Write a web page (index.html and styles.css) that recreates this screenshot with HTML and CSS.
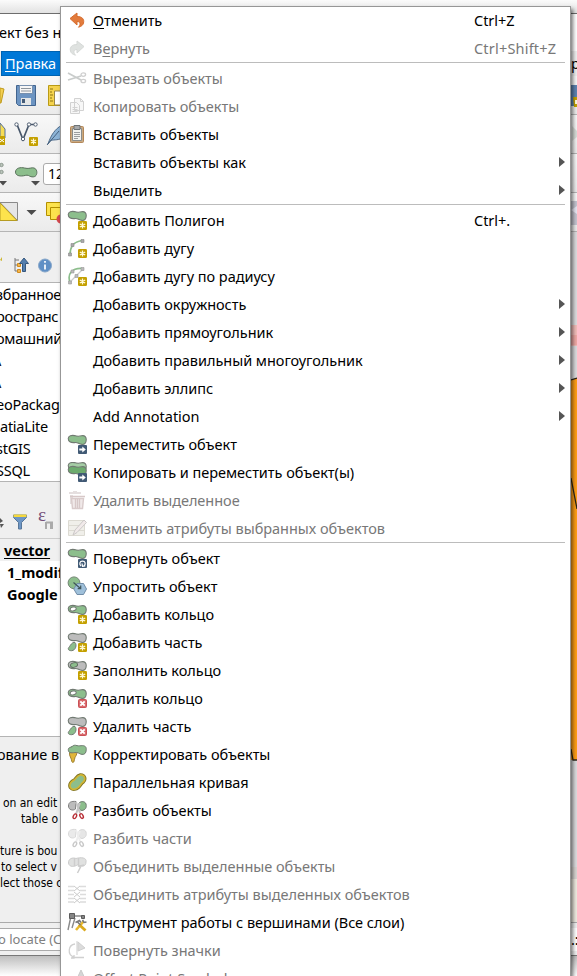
FILE: index.html
```html
<!DOCTYPE html>
<html lang="ru">
<head>
<meta charset="utf-8">
<title>QGIS</title>
<link rel="stylesheet" href="styles.css">
</head>
<body>
<svg class="defs" aria-hidden="true">
  <symbol id="blob" viewBox="0 0 20 20"><path d="M1.300 4.200C1.500 2 4.500 1 7.500 1.600C10 2.500 12 2.500 14.500 1.800C17.500 1 19.500 3 19.200 6C19.200 9 17.500 10.700 15 10.400C11.500 10.300 11 7.800 7.500 8.600C3.800 9 1 7.400 1.300 4.200Z" stroke="#717a72" stroke-width="1.100"/></symbol>
  <symbol id="star" viewBox="0 0 20 20"><rect x="11" y="11" width="9" height="9" rx="1.200" fill="#c4a000"/><path d="M15.500 12.400v6.200M12.800 14l5.400 3M18.200 14l-5.400 3" stroke="#fff9d8" stroke-width="1.300"/></symbol>
  <symbol id="go" viewBox="0 0 20 20"><rect x="11" y="11" width="9" height="9" rx="1" fill="#415a75"/><path d="M12.300 14.500h3v-2l3.500 3-3.500 3v-2h-3z" fill="#fff"/></symbol>
  <symbol id="del" viewBox="0 0 20 20"><rect x="11.500" y="11.500" width="8" height="8" rx="1" fill="#d9686b" stroke="#ca5156"/><path d="M13.300 13.300l4.400 4.400M17.700 13.300l-4.400 4.400" stroke="#fff" stroke-width="1.900"/></symbol>
  <symbol id="i-undo" viewBox="0 0 20 20"><path d="M3 8.500L10 3v3.500c5 0 7.500 2.500 6.500 6.500-.5 2-2 3.500-5 4.200 2-2 2.500-5.700-1.500-5.700V15z" fill="#e27b3c" stroke="#d66c2d" stroke-linejoin="round"/></symbol>
  <symbol id="i-redo" viewBox="0 0 20 20"><path d="M17 8.500L10 3v3.500c-5 0-7.500 2.500-6.500 6.500.5 2 2 3.500 5 4.200-2-2-2.500-5.700 1.500-5.700V15z" fill="#dfe2e0" stroke="#d6d9d7" stroke-linejoin="round"/></symbol>
  <symbol id="i-cut" viewBox="0 0 20 20"><path d="M1 5l13 7M1 12l13-4" fill="none" stroke="#c9cccb" stroke-width="1.700"/><ellipse cx="16.300" cy="6.600" rx="2.300" ry="1.700" fill="none" stroke="#cfcfcf" stroke-width="1.300"/><ellipse cx="16.300" cy="13" rx="2.300" ry="1.700" fill="none" stroke="#cfcfcf" stroke-width="1.300"/></symbol>
  <symbol id="i-copy" viewBox="0 0 20 20"><path d="M7.500 2.500h6l3 3v9h-9zM3.500 6.500h6l3 3v8h-9z" fill="#f7f7f7" stroke="#d2d2d2"/><path d="M5.500 11.500h5M5.500 13.500h5M5.500 15.500h5M13.500 2.500v3h3" stroke="#d2d2d2" fill="none"/></symbol>
  <symbol id="i-paste" viewBox="0 0 20 20"><rect x="3.500" y="2.500" width="13" height="16" rx="1" fill="#c9a982" stroke="#b3885a"/><path d="M5.500 4.500h9v12h-9z" fill="#f3f3f0" stroke="#898c8b"/><path d="M7 1.500h6v4H7z" fill="#a7a9ab" stroke="#6e7376"/><path d="M7 8.500h6M7 10.500h6M7 12.500h6M7 14.500h4" stroke="#9b9d9f"/></symbol>
  <symbol id="i-addpoly" viewBox="0 0 20 20"><use href="#blob" fill="#8cbe8c"/><use href="#star"/></symbol>
  <symbol id="i-arc" viewBox="0 0 20 20"><path d="M3 17C3 10 5 4 15 2.500" fill="none" stroke="#8cbe8c" stroke-width="1.700"/><path d="M1.500 15h3v3h-3zM4 5.500h3v3H4zM14 1.500h3v3h-3z" fill="#aaa" stroke="#888" stroke-width=".6"/><use href="#star"/></symbol>
  <symbol id="i-arcr" viewBox="0 0 20 20"><path d="M3 16C0 8 5 2 15 2.500" fill="none" stroke="#8cbe8c" stroke-width="1.700"/><path d="M3 16L16 3" stroke="#ccc" stroke-width="1.300"/><path d="M1.500 15h3v3h-3zM4 4h3v3H4zM14 1.500h3v3h-3zM8 8.500h3v3H8z" fill="#bbb" stroke="#999" stroke-width=".6"/><use href="#star"/></symbol>
  <symbol id="i-move" viewBox="0 0 20 20"><use href="#blob" fill="#8cbe8c"/><use href="#go"/></symbol>
  <symbol id="i-copymove" viewBox="0 0 20 20"><use href="#blob" y="-1" x="0" fill="#a5cda5"/><use href="#blob" y="3" fill="#6cab6d"/><use href="#go"/></symbol>
  <symbol id="i-trash" viewBox="0 0 20 20"><path d="M2 4V2h4V1h4v1h4v2zM3 5h3v9H3z" fill="#e5dfdf"/><path d="M4.500 8.500h12l-1 10h-10z" fill="#f0e9e9" stroke="#d9cbcb" stroke-width="1.400"/><path d="M3 6.500h15M8.500 9v9M10.500 9v9M12.500 9v9" stroke="#d7c8c8" stroke-width="1.300"/></symbol>
  <symbol id="i-attr" viewBox="0 0 20 20"><path d="M1.500 2.500h16v15h-16zM1.500 7.500h16M1.500 12.500h16" fill="#f0efea" stroke="#dcdad2"/><path d="M6 17l2-5 9-10 2.500 2.500-9.500 10z" fill="#f1eaea" stroke="#cbc8c8"/></symbol>
  <symbol id="i-rotate" viewBox="0 0 20 20"><use href="#blob" fill="#8cbe8c"/><rect x="11" y="11" width="9" height="9" rx="1" fill="#415a75"/><path d="M14 18.200c-2-2-1.500-5 1.500-5s3.500 3 1.500 4.500M15 15.500l.5 2.800 2.800-.4" fill="none" stroke="#fff" stroke-width="1.200"/></symbol>
  <symbol id="i-simplify" viewBox="0 0 20 20"><circle cx="7" cy="6.800" r="5.900" fill="#8cbe8c" stroke="#718572"/><path d="M10 7.500h6.500l3 5.500-3 5.500H10L6.800 13z" fill="#9fc0da" stroke="#718da8"/><path d="M6.500 6.500l7 6M13.700 9.500v3.200h-3" stroke="#3f5459" fill="none" stroke-width="1.200"/></symbol>
  <symbol id="ring" viewBox="0 0 20 20"><use href="#blob" fill="#8cbe8c"/><ellipse cx="6.200" cy="5" rx="3.100" ry="1.900" fill="#fff" stroke="#717a72" transform="rotate(-14 6 5)"/></symbol>
  <symbol id="part" viewBox="0 0 20 20"><use href="#blob" fill="#bcbcbc"/><path d="M8 10.500c2 2 1 8-3.500 8.200-3 0-4-1.700-2.600-3.300C3.400 13.500 5 9.700 8 10.500z" fill="#8cbe8c" stroke="#717a72"/></symbol>
  <symbol id="i-addring" viewBox="0 0 20 20"><use href="#ring"/><use href="#star"/></symbol>
  <symbol id="i-addpart" viewBox="0 0 20 20"><use href="#part"/><use href="#star"/></symbol>
  <symbol id="i-fill" viewBox="0 0 20 20"><use href="#blob" fill="#bcbcbc"/><ellipse cx="7" cy="5" rx="3.600" ry="2.200" fill="#8cbe8c" stroke="#607062" transform="rotate(-14 7 5)"/><use href="#star"/></symbol>
  <symbol id="i-delring" viewBox="0 0 20 20"><use href="#ring"/><use href="#del"/></symbol>
  <symbol id="i-delpart" viewBox="0 0 20 20"><use href="#part"/><use href="#del"/></symbol>
  <symbol id="i-reshape" viewBox="0 0 20 20"><path d="M2.500 8.500L10 8c-.2 3-1.200 4-2 5.500-.8 1.700-.5 3-1.200 4.500-1 .8-1.800.3-2-.5C4.600 14 2 12 2.500 8.500z" fill="#e0b63a" stroke="#9f8233"/><path d="M1.300 5.500C1.200 3.500 4 3.200 5 2.700 6.500 1 8 1 10 1.600c2 .6 3.500 0 5.500 0 3.500.2 4 2.400 3.700 4.400 0 3-1.700 4.700-4.200 4.400C12 10 12 8.500 9.500 8.500 7 8.500 5.500 9 4 8.800 2 8.600 1.300 7.500 1.300 5.500z" fill="#8cbe8c" stroke="#717a72"/></symbol>
  <symbol id="i-offset" viewBox="0 0 20 20"><path d="M4.800 14.800c-1-2 .5-4 3.200-5.300 2.500-1.500 2.500-4.500 5.500-5 2.800 0 3.500 2.700 1.500 4.500-2.500 1.500-2.500 3.500-4.500 5-2 1.500-4.500 2.300-5.700.8z" fill="#8cbe8c" stroke="#817420" stroke-width="6.600"/><path d="M4.800 14.800c-1-2 .5-4 3.200-5.300 2.500-1.500 2.500-4.500 5.500-5 2.800 0 3.500 2.700 1.500 4.500-2.500 1.500-2.500 3.500-4.500 5-2 1.500-4.500 2.300-5.700.8z" fill="#8cbe8c" stroke="#d2b534" stroke-width="4.800"/><path d="M4.800 14.800c-1-2 .5-4 3.200-5.300 2.500-1.500 2.500-4.500 5.500-5 2.800 0 3.500 2.700 1.500 4.500-2.500 1.500-2.500 3.500-4.500 5-2 1.500-4.500 2.300-5.700.8z" fill="#8cbe8c" stroke="#8cbe8c" stroke-width="1.600"/></symbol>
  <symbol id="i-split" viewBox="0 0 20 20"><path d="M1.500 6c0-4 3-5 7.500-4.500L8.500 9C6 11 1.500 10 1.500 6z" fill="#bcbcbc" stroke="#808080"/><path d="M12 3c2-2 6-2 7 1 1 4-1 6-4 6.500-2 0-3-2-3-3.500z" fill="#8cbe8c" stroke="#717a72"/><path d="M9 2l4 11M13 3l-4 11" stroke="#c5c5c5" stroke-width="2"/><ellipse cx="8" cy="16.300" rx="1.500" ry="2.500" transform="rotate(28 8 16)" fill="none" stroke="#b82e36" stroke-width="1.400"/><ellipse cx="14.500" cy="16.300" rx="1.500" ry="2.500" transform="rotate(-28 14 16)" fill="none" stroke="#b82e36" stroke-width="1.400"/></symbol>
  <symbol id="i-merge" viewBox="0 0 20 20"><path d="M1.500 7c-.5-4 4-6 7.500-4.500 5-1.500 11-1 10 3.500 0 5-5 5-8 2.500-3 2.500-9 3-9.500-1.500z" fill="#e0e1e0" stroke="#ccc"/><path d="M7.500 2v8M11.500 2v8l2 1-3 6M13 10l4-1" fill="none" stroke="#cdcdcd" stroke-width="1.500"/></symbol>
  <symbol id="i-mergeattr" viewBox="0 0 20 20"><path d="M1 2.500h6M13 2.500h6M1 6.500h6M13 6.500h6M1 10.500h6M13 10.500h6M1 14.500h6M13 14.500h6M1 18h6M13 18h6" stroke="#dcdcdc" stroke-width="1.500"/><path d="M7 2l6 5M13 2L7 7M7 8l6 5M13 8l-6 5M7 14l6 5M13 14l-6 5" stroke="#ccc"/></symbol>
  <symbol id="i-vertex" viewBox="0 0 20 20"><path d="M5 4h12M4 4L1 18M8 6L5 16" stroke="#8a8a8a" stroke-width="1.400"/><path d="M2.500 1.500h5v5h-5zM14.500 3.500h3v3h-3z" fill="#858585" stroke="#5c5c5c"/><path d="M16.500 9.500L9 18" stroke="#e8b92e" stroke-width="2.600"/><path d="M12 12.500l6.500 6" stroke="#dba91c" stroke-width="2.800"/><path d="M8.500 10.500l4-2 1.500 2M10.500 10l3 3M15.500 8l1.500 2.500 2.500-.5" stroke="#777" stroke-width="1.500" fill="none"/></symbol>
  <symbol id="i-rotsym" viewBox="0 0 20 20"><path d="M8 4C1 5 0 15 7 17M4 18h3v-3M5 17.500h12" fill="none" stroke="#d0d0d0" stroke-width="1.300"/><path d="M10 1v14M11 2l7 6-7 3z" fill="#dcdcdc" stroke="#cfcfcf"/></symbol>
  <symbol id="i-offsym" viewBox="0 0 20 20"><path d="M14 2l6 13H8z" fill="#d6d6d6" stroke="#c9c9c9"/></symbol>
</svg>

<div class="window">
  <header class="title">ект без н</header>
  <nav class="menubar"><span class="active"><u>П</u>равка</span><span>р</span></nav>
  <div class="toolbar">
    <svg width="60" height="38" viewBox="0 0 60 38"><path d="M0 12l4 1-3 14H0z" fill="#f3cf52" stroke="#c09b1e"/><path d="M16.500 9.500h19v20h-17l-2-2z" fill="#6c94c2" stroke="#42648e"/><path d="M19.500 9.500h13v8h-13z" fill="#f6f6f6" stroke="#7790ae"/><path d="M21 12.500h10M21 15h10" stroke="#8c949c"/><path d="M21 22h10v7H21z" fill="#e3e6e7"/><path d="M22 23h3v4h-3z" fill="#435b78"/><path d="M48.500 9.500h16v20h-16z" fill="#f5d34e" stroke="#b99b16"/><path d="M54.500 15h10v14h-10z" fill="#fff" stroke="#9c8748"/><path d="M50 13h3M50 16h2M50 19h3M50 22h2M50 25h3" stroke="#8b7414"/></svg>
    <svg class="edge" width="6" height="38"><path d="M0 9h6v21H0z" fill="#5d83b1"/><path d="M2 21h4v10H3z" fill="#c4a000"/><path d="M4 24h2v4H4z" fill="#fff9d8"/></svg>
  </div>
  <div class="toolbar">
    <svg width="60" height="38" viewBox="0 0 60 38"><path d="M0 8l5 6v9H0z" fill="#f6dc55" stroke="#55719a"/><path d="M0 21h5v9H0z" fill="#c4a000"/><path d="M0 24l4 3M4 24l-4 3" stroke="#fff"/><path d="M17 9.500l6 15 6-15h6" fill="none" stroke="#47566a" stroke-width="1.700"/><g fill="#fff" stroke="#536174"><circle cx="16.500" cy="9.500" r="1.700"/><circle cx="29" cy="9.500" r="1.700"/><circle cx="35.500" cy="9.500" r="1.700"/><circle cx="23" cy="24" r="1.700"/></g><rect x="29" y="22" width="9" height="9" rx="1" fill="#c4a000"/><path d="M33.500 23.500v6M31 25l5 3M36 25l-5 3" stroke="#fff9d8" stroke-width="1.200"/><path d="M48 29c3-9 7-15 14-19v13c-5 3-9 1-12 3z" fill="#8db4d7" stroke="#4e6a88"/><path d="M47 30l12-14" stroke="#46617e"/></svg>
    <svg class="edge" width="6" height="38"><path d="M1 11l5 5v6l-5 4z" fill="#d7dcd7"/></svg>
  </div>
  <div class="toolbar">
    <svg width="44" height="38" viewBox="0 0 44 38"><g fill="#bbc5bc" stroke="#8d998f"><circle cx="1.500" cy="11" r="1.700"/><circle cx="1.500" cy="18" r="1.700"/></g><path d="M15.500 18c0-4 5-5 9-4s5 0 8-.2c4 0 5 4 4 6.700-1 3-5 3-8 1-2-1-4 .5-7 .5-4 0-6-1.500-6-4z" fill="#8cbe8c" stroke="#58705a"/><path d="M-1 27h8l-4 4.500zM31 27h9l-4.500 4.500z" fill="#4c4c4c"/></svg>
    <span class="spin">12</span>
  </div>
  <div class="toolbar">
    <svg width="60" height="38" viewBox="0 0 60 38"><path d="M0 9.500h17.500v18z" fill="#e6e6e6" stroke="#8a8a8a"/><path d="M0 10l17 17.500H0z" fill="#fde34c" stroke="#b69c22"/><path d="M26.500 17h10l-5 5z" fill="#4c4c4c"/><path d="M46.500 9.500h17v13h-17z" fill="#fce34d" stroke="#b38f00"/><path d="M50.500 14.500h13v12h-13z" fill="#fce34d" stroke="#b38f00"/><circle cx="61" cy="26" r="4.500" fill="#d5474e"/></svg>
    <svg class="edge" width="6" height="38"><path d="M0 8h6v24H0z" fill="#c4c4cf"/><path d="M0 17l6-4v8z" fill="#e6e6f2"/></svg>
  </div>
  <main class="body">
    <aside class="docks">
      <div class="docktools browser-tools">
        <svg width="60" height="24" viewBox="0 0 60 24"><path d="M0 7l2-3v4z" fill="#cdb732"/><path d="M15 5v13h5M15 7h4M15 12h4" fill="none" stroke="#777"/><path d="M17.500 10.500h3v3h-3zM17.500 16.500h3v3h-3z" fill="#f5b64b" stroke="#d18b1d"/><path d="M22.500 18.500v-8h-3L24 5l4.500 5.500h-3v8z" fill="#537eae" stroke="#36577d"/><circle cx="45" cy="12.500" r="6.500" fill="#5f8fc5" stroke="#86a6c9"/><path d="M45 8v1.800M45 11.500v5" stroke="#fff" stroke-width="1.700"/></svg>
      </div>
      <ul class="tree browser"><li>збранное</li><li>ространс</li><li>омашний</li><li>\</li><li>\</li><li>eoPackage</li><li class="flush">atiaLite</li><li>stGIS</li><li>SSQL</li></ul>
      <div class="docktools layer-tools">
        <svg width="60" height="24" viewBox="0 0 60 24"><path d="M0 8l3 3-3 2zM0 14h4l-3 4z" fill="#555"/><path d="M13.500 5h13v2.500l-5 5V19h-3v-6.500l-5-5z" fill="#6d96c5" stroke="#58779a"/><path d="M13.500 4.500h13V7h-13z" fill="#f5d83e"/><path d="M46 12v7M51 12v7M46 12.500h6V19" fill="none" stroke="#aaa" stroke-width="2"/></svg>
        <span class="eps">ε</span>
      </div>
      <ul class="tree layers"><li class="current"><u>vector</u></li><li>1_modif</li><li>Google</li></ul>
      <section class="help">
        <h2>ование в</h2>
        <p><span class="a">on an edit</span><span class="b">table o</span></p>
        <p><span class="c">ture is bou</span><span class="d">to select v</span><span class="e">lect those c</span></p>
      </section>
    </aside>
    <svg class="map" width="6" height="691" viewBox="0 0 6 691"><path d="M0 0h6v691H0z" fill="#dcdcde"/><path d="M0 93h6v21H0z" fill="#f2bdb9"/><path d="M0 103h6v10H0z" fill="#efa9a5"/><path d="M0 148l6-2v382H0z" fill="#ff9e17"/><path d="M0 148l6-2M0 246l6 31M0 517l2 11h4" stroke="#2c2618" stroke-width="1.300" fill="none"/><path d="M0 635h6v12H0z" fill="#d9d6d3"/><path d="M0 647h6v44H0z" fill="#eeebe0"/></svg>
  </main>
  <footer class="status"><div class="locate">o locate (С</div><div class="coord">.:</div></footer>
</div>

<div class="menu">
  <div class="item"><svg><use href="#i-undo"/></svg><span><u>О</u>тменить</span><kbd>Ctrl+Z</kbd></div>
  <div class="item off"><svg><use href="#i-redo"/></svg><span>В<u>е</u>рнуть</span><kbd class="wide">Ctrl+Shift+Z</kbd></div>
  <hr>
  <div class="item off"><svg><use href="#i-cut"/></svg><span>Вырезать объекты</span></div>
  <div class="item off"><svg><use href="#i-copy"/></svg><span>Копировать объекты</span></div>
  <div class="item"><svg><use href="#i-paste"/></svg><span>Вставить объекты</span></div>
  <div class="item sub"><svg></svg><span>Вставить объекты как</span></div>
  <div class="item sub"><svg></svg><span>Выделить</span></div>
  <hr>
  <div class="item"><svg><use href="#i-addpoly"/></svg><span>Добавить Полигон</span><kbd>Ctrl+.</kbd></div>
  <div class="item"><svg><use href="#i-arc"/></svg><span>Добавить дугу</span></div>
  <div class="item"><svg><use href="#i-arcr"/></svg><span>Добавить дугу по радиусу</span></div>
  <div class="item sub"><svg></svg><span>Добавить окружность</span></div>
  <div class="item sub"><svg></svg><span>Добавить прямоугольник</span></div>
  <div class="item sub"><svg></svg><span>Добавить правильный многоугольник</span></div>
  <div class="item sub"><svg></svg><span>Добавить эллипс</span></div>
  <div class="item sub"><svg></svg><span>Add Annotation</span></div>
  <div class="item"><svg><use href="#i-move"/></svg><span>Переместить объект</span></div>
  <div class="item"><svg><use href="#i-copymove"/></svg><span>Копировать и переместить объект(ы)</span></div>
  <div class="item off"><svg><use href="#i-trash"/></svg><span>Удалить выделенное</span></div>
  <div class="item off"><svg><use href="#i-attr"/></svg><span>Изменить атрибуты выбранных объектов</span></div>
  <hr>
  <div class="item"><svg><use href="#i-rotate"/></svg><span>Повернуть объект</span></div>
  <div class="item"><svg><use href="#i-simplify"/></svg><span>Упростить объект</span></div>
  <div class="item"><svg><use href="#i-addring"/></svg><span>Добавить кольцо</span></div>
  <div class="item"><svg><use href="#i-addpart"/></svg><span>Добавить часть</span></div>
  <div class="item"><svg><use href="#i-fill"/></svg><span>Заполнить кольцо</span></div>
  <div class="item"><svg><use href="#i-delring"/></svg><span>Удалить кольцо</span></div>
  <div class="item"><svg><use href="#i-delpart"/></svg><span>Удалить часть</span></div>
  <div class="item"><svg><use href="#i-reshape"/></svg><span>Корректировать объекты</span></div>
  <div class="item"><svg><use href="#i-offset"/></svg><span>Параллельная кривая</span></div>
  <div class="item"><svg><use href="#i-split"/></svg><span>Разбить объекты</span></div>
  <div class="item off"><svg class="faded"><use href="#i-split"/></svg><span>Разбить части</span></div>
  <div class="item off"><svg><use href="#i-merge"/></svg><span>Объединить выделенные объекты</span></div>
  <div class="item off"><svg><use href="#i-mergeattr"/></svg><span>Объединить атрибуты выделенных объектов</span></div>
  <div class="item"><svg><use href="#i-vertex"/></svg><span>Инструмент работы с вершинами (Все слои)</span></div>
  <div class="item off"><svg><use href="#i-rotsym"/></svg><span>Повернуть значки</span></div>
  <div class="item off"><svg><use href="#i-offsym"/></svg><span>Offset Point Symbol</span></div>
</div>
</body>
</html>
```
FILE: styles.css
```css
* { box-sizing: border-box; }
html, body { margin: 0; height: 976px; overflow: hidden; }
body {
  position: relative;
  padding-top: 13px;
  background: linear-gradient(#fbfbfb, #e2e2e2 13px, #bbb 955px, #fff 976px);
  font: 14.5px/22px "Noto Sans", "Open Sans", sans-serif;
  letter-spacing: -.03px;
  color: #000;
}
ul, p, h2 { margin: 0; padding: 0; list-style: none; font-weight: normal; }
.defs { position: absolute; width: 0; height: 0; }
.window {
  height: 943px;
  display: flex;
  flex-direction: column;
  border-top: 1px solid #6d6d6d;
  border-bottom: 1px solid #777;
  background: #efefef;
  overflow: hidden;
}
.title { flex: 0 0 37px; padding-top: 7px; background: #fff; white-space: nowrap; text-indent: -1px; }
.menubar { flex: 0 0 25px; display: flex; justify-content: space-between; line-height: 25px; border-bottom: 1px solid #d4d4d4; }
.menubar .active { width: 70px; margin-left: 1px; padding-left: 3px; border: 1px solid #0063b1; background: #0078d7; color: #fff; line-height: 23px; }
.menubar span:last-child { width: 6px; overflow: hidden; }
.toolbar { flex: 0 0 39px; display: flex; justify-content: space-between; background: linear-gradient(#f8f8f8, #ebebeb); border-bottom: 1px solid #b5b5b5; overflow: hidden; }
.menubar + .toolbar { margin-top: -1px; }
.toolbar svg, .docktools svg { flex: none; }
.spin { width: 60px; height: 22px; margin: 9px auto 0 -1px; padding-left: 4px; border: 1px solid #aaa; border-radius: 3px; background: #fff; line-height: 20px; font-size: 14px; }
.body { flex: 1; min-height: 0; display: flex; justify-content: space-between; }
.docks { width: 120px; display: flex; flex-direction: column; }
.docktools { display: flex; }
.browser-tools { flex: 0 0 51px; padding-top: 21px; border-bottom: 1px solid #b4b4b4; }
.layer-tools { flex: 0 0 57px; padding-top: 28px; border-bottom: 1px solid #ccc; }
.eps { margin: -6px 0 0 -22px; font: 19px/22px "Liberation Serif", serif; color: #744f79; }
.tree { flex: 0 0 198px; background: #fff; border-bottom: 1px solid #b4b4b4; white-space: nowrap; }
.tree li { height: 22px; }
.browser { text-indent: -4px; letter-spacing: -.25px; }
.browser .flush { text-indent: 0; }
.layers { font-weight: bold; }
.layers li { padding-left: 7px; }
.layers .current { padding-left: 4px; background: #f0f0f0; }
.help { padding-top: 7px; }
.help p { display: flex; flex-direction: column; padding-top: 16px; font: 12px/16px "DejaVu Sans Condensed", "DejaVu Sans", sans-serif; white-space: nowrap; }
.help h2 { font-size: 14.42px; line-height: 22px; padding-bottom: 13px; text-indent: -3px; }
.a { padding-left: 3px; }
.b { padding-left: 21px; }
.d { padding-left: 1px; }
.status { flex: 0 0 33px; display: flex; justify-content: space-between; padding-top: 5px; border-top: 1px solid #aaa; }
.locate { width: 120px; height: 23px; border: 1px solid #aaa; border-left: 0; background: #fff; color: #808080; line-height: 21px; font-size: 13px; text-indent: -2px; }
.coord { width: 6px; height: 23px; background: #fff; line-height: 23px; overflow: hidden; }

.menu {
  position: absolute;
  left: 60px;
  top: 6px;
  width: 511px;
  height: 990px;
  background: #fff;
  box-shadow: inset 0 0 0 1px #979797, 2px 3px 4px 0 rgba(0, 0, 0, .55);
}
.item { position: relative; display: flex; align-items: center; height: 28px; padding-left: 7px; white-space: nowrap; }
.item > svg { width: 20px; height: 20px; margin-right: 6px; flex: none; }
.item span { line-height: 22px; }
.item kbd { position: absolute; left: 414px; font: inherit; }
.item .wide { letter-spacing: .2px; }
.off { color: #787878; }
.faded { opacity: .3; filter: grayscale(1); }
.sub::after { content: ""; margin: 0 6px 0 auto; border-left: 6px solid #555; border-top: 5px solid transparent; border-bottom: 5px solid transparent; }
hr { height: 2px; margin: 0 6px; border: 0; border-top: 1px solid #bcbcbc; }
u { text-underline-offset: 2px; text-decoration-thickness: 1px; }
```
